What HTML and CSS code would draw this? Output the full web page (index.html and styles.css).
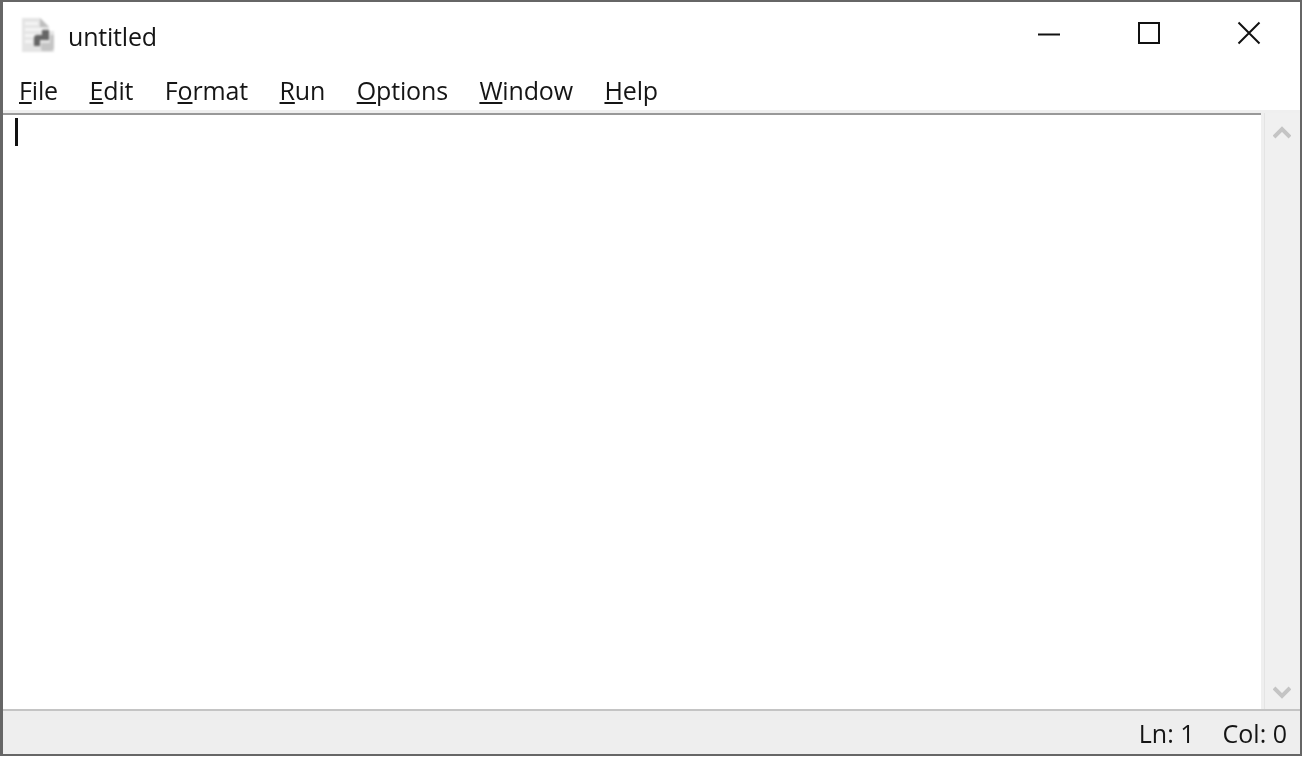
FILE: index.html
```html
<!DOCTYPE html>
<html lang="en">
<head>
<meta charset="utf-8">
<title>untitled</title>
<link rel="stylesheet" href="styles.css">
</head>
<body>
<div class="window">
  <header class="titlebar">
    <div class="title-left">
      <svg class="app-icon" width="34" height="36" viewBox="0 0 34 36" aria-hidden="true">
        <path d="M1 0H19L28 9V13H33V34H1Z" fill="#e4e4e4"/>
        <path d="M4 4H17V7H4ZM4 10H22V13H4ZM4 16H15V19H4ZM4 22H11V25H4Z" fill="#f5f5f5"/>
        <path d="M19 0L28 9H19Z" fill="#bdbdbd"/>
        <path d="M13 28V20Q13 17 16 17H21V12H28V22H19V28Z" fill="#666"/>
        <path d="M20 30V25H29V17H33V29Q33 33 29 33H22Q20 33 20 30Z" fill="#c4c4c4"/>
      </svg>
      <span class="title-text">untitled</span>
    </div>
    <div class="controls">
      <svg class="ctl" width="24" height="24" viewBox="0 0 24 24" aria-hidden="true"><path d="M1 13.500H23" stroke="#111" stroke-width="2"/></svg>
      <svg class="ctl" width="24" height="24" viewBox="0 0 24 24" aria-hidden="true"><rect x="2" y="2" width="20" height="20" fill="none" stroke="#111" stroke-width="2"/></svg>
      <svg class="ctl" width="24" height="24" viewBox="0 0 24 24" aria-hidden="true"><path d="M1.500 1.500L22.500 22.500M22.500 1.500L1.500 22.500" stroke="#111" stroke-width="2"/></svg>
    </div>
  </header>
  <nav class="menubar">
    <span class="menu-item"><u>F</u>ile</span>
    <span class="menu-item"><u>E</u>dit</span>
    <span class="menu-item">F<u>o</u>rmat</span>
    <span class="menu-item"><u>R</u>un</span>
    <span class="menu-item"><u>O</u>ptions</span>
    <span class="menu-item"><u>W</u>indow</span>
    <span class="menu-item"><u>H</u>elp</span>
  </nav>
  <main class="workspace">
    <div class="editor"><span class="caret"></span></div>
    <div class="scrollbar">
      <svg width="18" height="14" viewBox="0 0 18 14" aria-hidden="true"><path d="M1 11L9 3L17 11" fill="none" stroke="#c4c4c4" stroke-width="4"/></svg>
      <svg width="18" height="14" viewBox="0 0 18 14" aria-hidden="true"><path d="M1 3L9 11L17 3" fill="none" stroke="#c4c4c4" stroke-width="4"/></svg>
    </div>
  </main>
  <footer class="statusbar">
    <span>Ln: 1</span>
    <span>Col: 0</span>
  </footer>
</div>
</body>
</html>
```

FILE: styles.css
```css
* { box-sizing: border-box; }
html, body { margin: 0; height: 100%; background: #fff; overflow: hidden; }
body { padding-bottom: 1px; }
.window {
  height: 756px;
  width: 1302px;
  display: flex;
  flex-direction: column;
  border: solid #666;
  border-width: 2px 2px 2px 3px;
  background: #fff;
  color: #151515;
  font-family: "Open Sans", "Noto Sans", sans-serif;
}
.titlebar {
  height: 66px;
  flex: none;
  display: flex;
  align-items: center;
  justify-content: space-between;
  padding: 2px 39px 0 18px;
}
.title-left { display: flex; align-items: center; gap: 13px; }
.app-icon { filter: blur(0.9px); }
.title-text { font-size: 25px; letter-spacing: -0.2px; filter: blur(0.5px); }
.controls { display: flex; gap: 76px; margin-top: -6px; }
.ctl { display: block; }
.menubar {
  height: 42px;
  flex: none;
  display: flex;
  gap: 31.5px;
  align-items: center;
  padding: 2px 0 0 16px;
  font-size: 25px;
  letter-spacing: -0.15px;
}
.menu-item { filter: blur(0.5px); line-height: 34px; }
.menu-item u { text-decoration-thickness: 2px; text-underline-offset: 2px; }
.workspace { flex: 1; min-height: 0; display: flex; background: #efefef; padding-top: 3px; }
.editor {
  flex: 1;
  background: #fff;
  border-top: 2px solid #999;
  padding: 3px 0 0 12px;
  margin-right: 2px;
}
.caret { display: block; width: 3px; height: 28px; background: #111; }
.scrollbar {
  width: 36px;
  flex: none;
  display: flex;
  flex-direction: column;
  justify-content: space-between;
  align-items: center;
  padding: 13px 2px 10px 0;
  margin-left: 1px;
  background: #f0f0f0;
  border-left: 1px solid #e4e4e4;
}
.scrollbar svg { filter: blur(0.6px); }
.statusbar {
  height: 45px;
  flex: none;
  display: flex;
  justify-content: flex-end;
  align-items: center;
  gap: 28px;
  padding: 0 13px 0 0;
  background: #eee;
  border-top: 2px solid #c4c4c4;
  font-size: 25px;
  letter-spacing: 0;
}
.statusbar span { filter: blur(0.5px); }
```
